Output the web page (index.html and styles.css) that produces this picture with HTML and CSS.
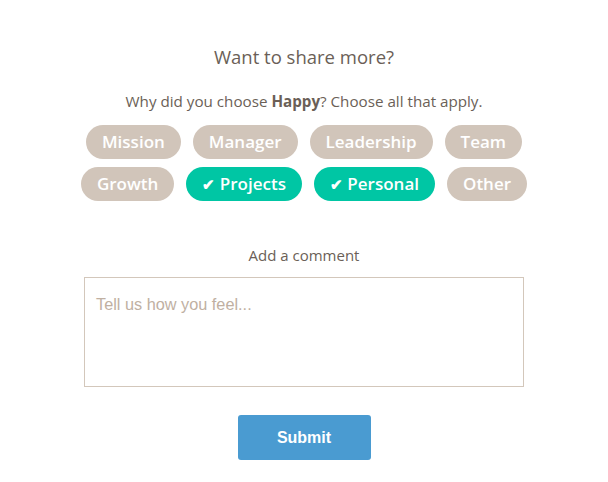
FILE: index.html
```html
<!DOCTYPE html>
<html lang="en">
<head>
  <meta charset="UTF-8" />
  <title>Feedback</title>
  <link rel="stylesheet" href="styles.css">
</head>
<body>
  <div class="feedback">
    <h2>Want to share more?</h2>
    <p class="question">Why did you choose <strong>Happy</strong>? Choose all that apply.</p>

    <div class="tags">
      <span class="tag">Mission</span>
      <span class="tag">Manager</span>
      <span class="tag">Leadership</span>
      <span class="tag">Team</span>
      <span class="tag">Growth</span>
      <span class="tag selected"><span class="check">&#10004;</span> Projects</span>
      <span class="tag selected"><span class="check">&#10004;</span> Personal</span>
      <span class="tag">Other</span>
    </div>

    <p class="label">Add a comment</p>
    <textarea placeholder="Tell us how you feel..."></textarea>

    <button>Submit</button>
  </div>
</body>
</html>
```

FILE: styles.css
```css
* {
  box-sizing: border-box;
}

body {
  margin: 0;
  background: #fff;
  font-family: 'Open Sans', sans-serif;
  color: #6b5f57;
}

.feedback {
  width: 440px;
  margin: 0 auto;
  padding-top: 44px;
  display: flex;
  flex-direction: column;
  align-items: center;
}

h2 {
  margin: 0;
  font-size: 18.5px;
  font-weight: 400;
  line-height: 26px;
}

.question {
  margin: 22px 0 0;
  font-size: 15.2px;
  line-height: 18px;
}

.question strong {
  font-weight: 700;
}

.tags {
  display: flex;
  flex-wrap: wrap;
  justify-content: center;
  gap: 8px 12px;
  margin-top: 15px;
  width: 460px;
}

.tag {
  height: 34px;
  line-height: 34px;
  padding: 0 16px;
  border-radius: 17px;
  background: #d1c5ba;
  color: #fff;
  font-weight: 600;
  font-size: 17px;
}

.tag .check {
  font-size: 15px;
}

.tag.selected {
  background: #00c6a4;
}

.label {
  margin: 44px 0 0;
  font-size: 15px;
  line-height: 20px;
}

textarea {
  margin-top: 12px;
  width: 440px;
  height: 110px;
  border: 1px solid #d3c7bb;
  border-radius: 0;
  padding: 17px 11px 12px;
  resize: none;
  font-family: 'Liberation Sans', Arial, sans-serif;
  font-size: 16.3px;
  color: #6b5f57;
}

textarea::placeholder {
  color: #c0b0a2;
}

button {
  margin-top: 28px;
  width: 133px;
  height: 45px;
  border: none;
  border-radius: 3px;
  background: #4a9bd1;
  color: #fff;
  font-family: 'Liberation Sans', Arial, sans-serif;
  font-weight: 700;
  font-size: 16px;
  cursor: pointer;
}
```
